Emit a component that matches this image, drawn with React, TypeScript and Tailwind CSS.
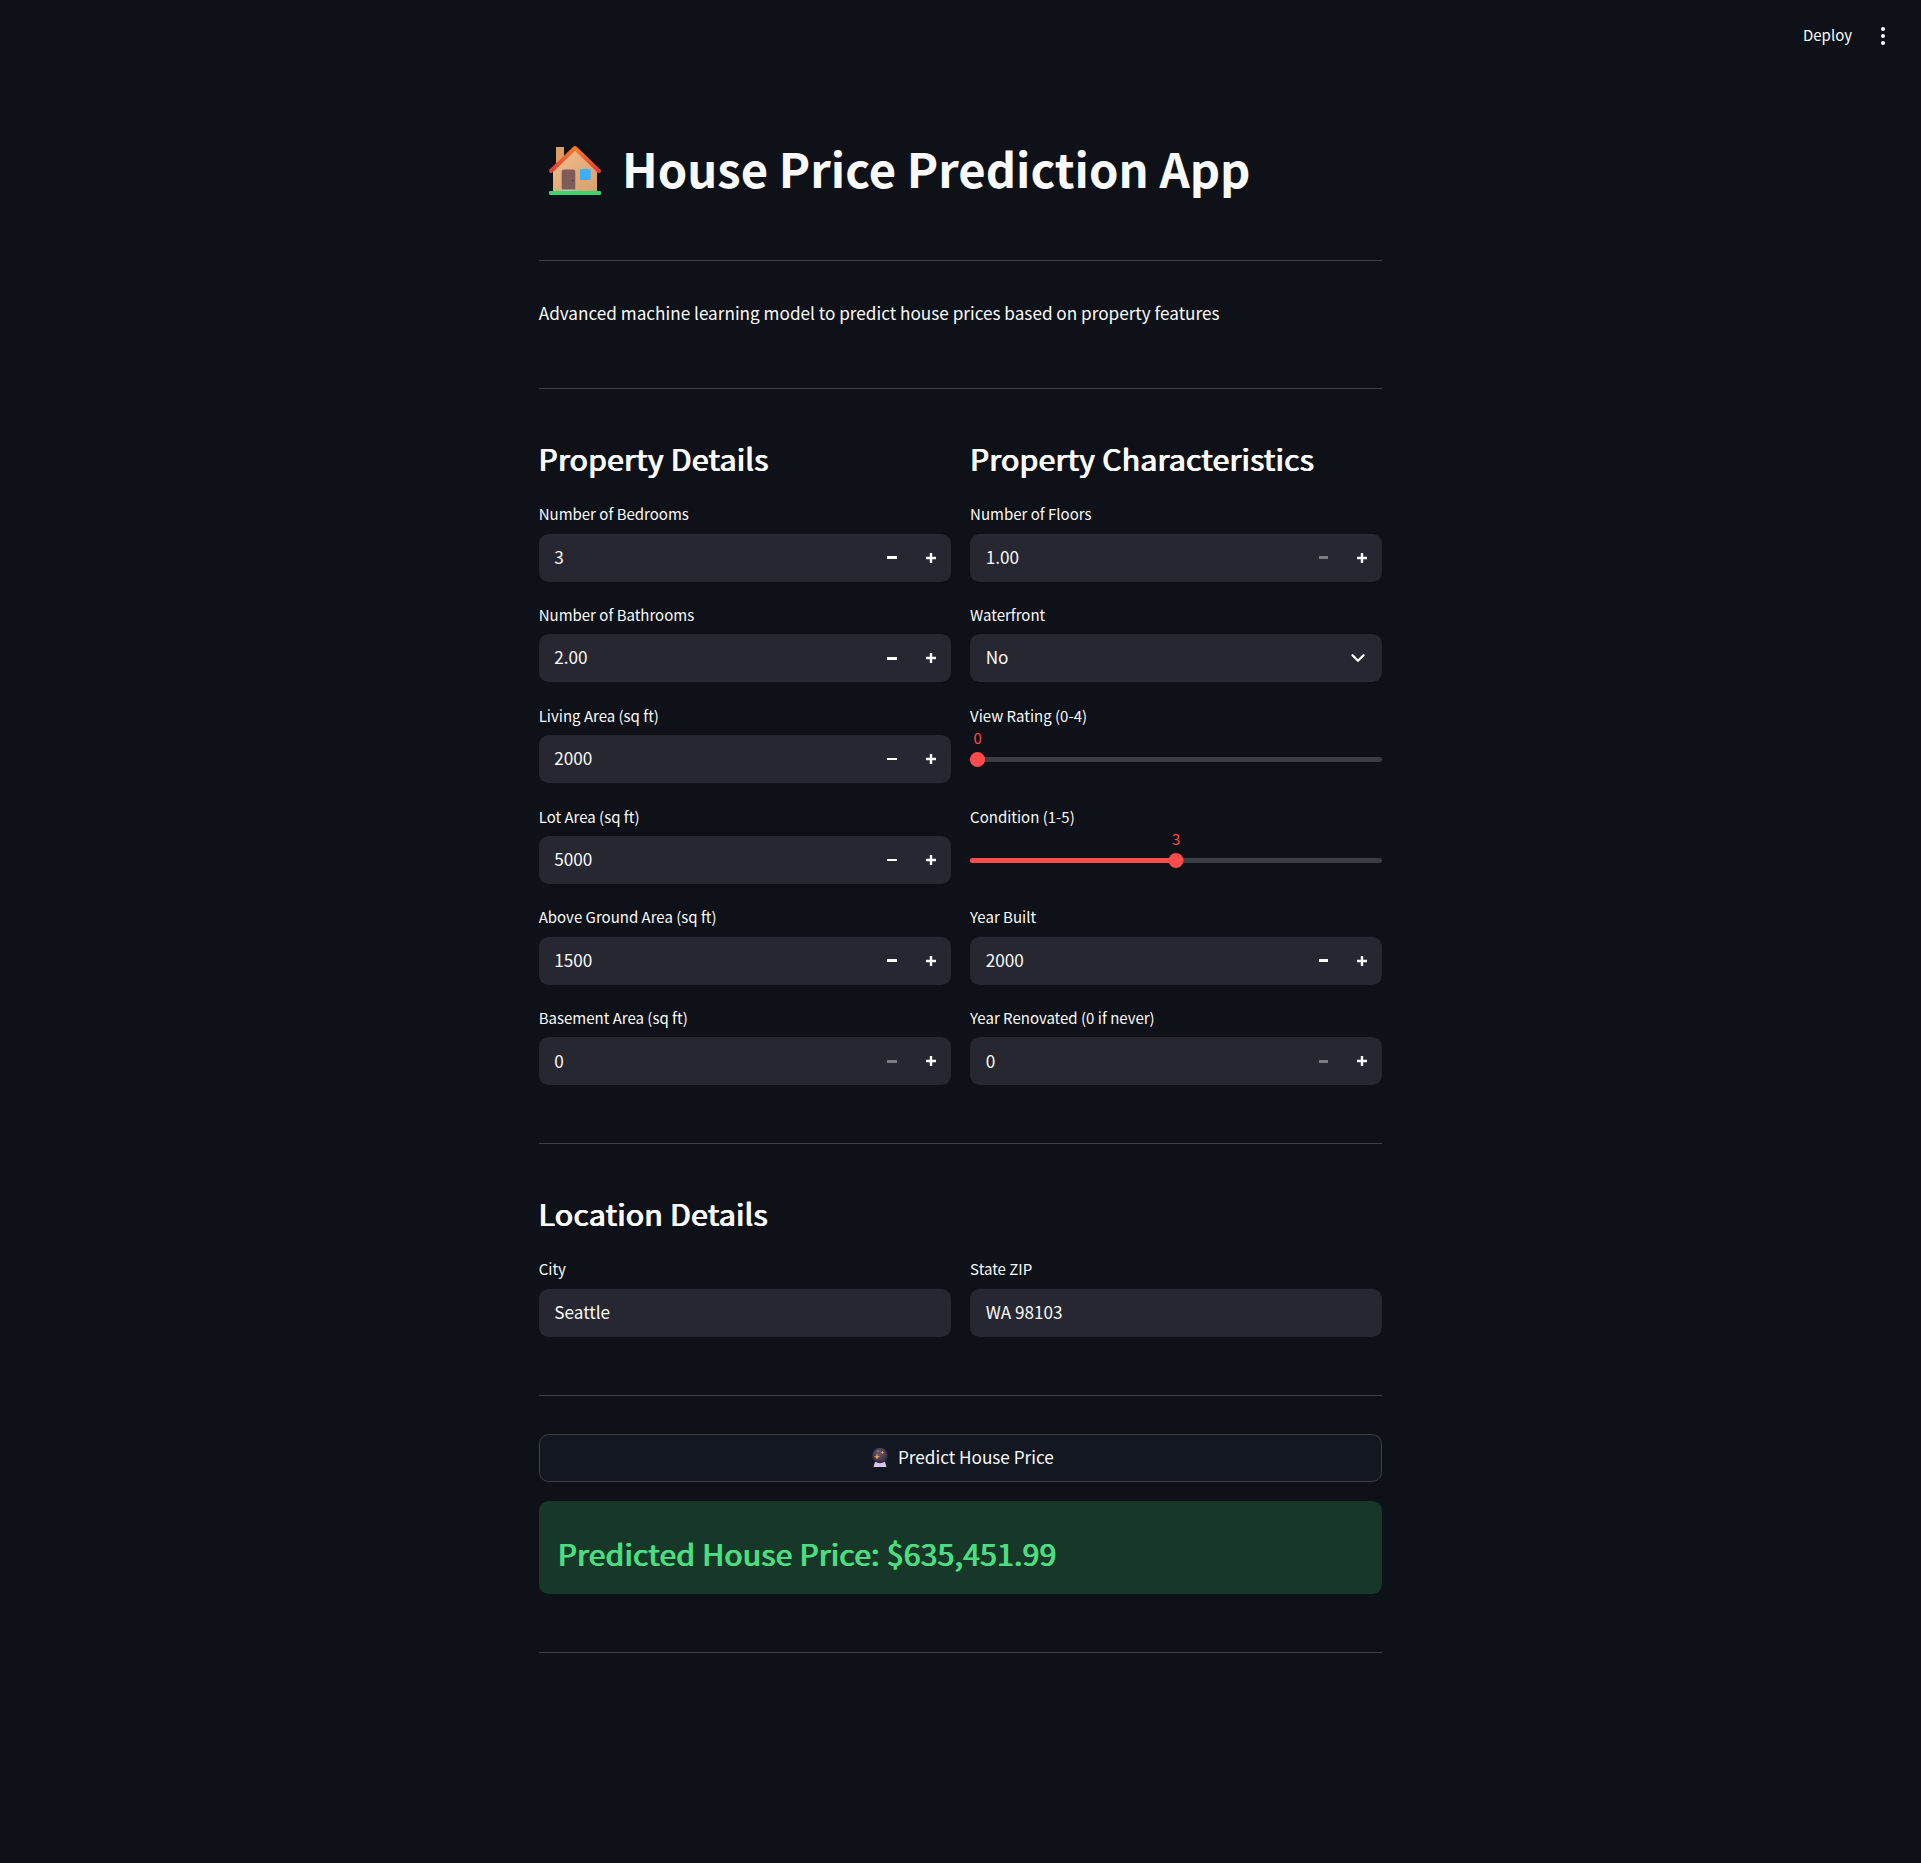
import { ChevronDown } from "lucide-react";

const bedroomsColumn = [
  { label: "Number of Bedrooms", value: "3" },
  { label: "Number of Bathrooms", value: "2.00" },
  { label: "Living Area (sq ft)", value: "2000" },
  { label: "Lot Area (sq ft)", value: "5000" },
  { label: "Above Ground Area (sq ft)", value: "1500" },
  { label: "Basement Area (sq ft)", value: "0", minusOff: true },
];

function HouseEmoji() {
  return (
    <svg width="52" height="50" viewBox="0 0 52 50">
      <defs>
        <linearGradient id="wall" x1="0" y1="0" x2="1" y2="1">
          <stop offset="0" stopColor="#efbf8e" />
          <stop offset="1" stopColor="#daa06c" />
        </linearGradient>
        <linearGradient id="roof" x1="0" y1="0" x2="0" y2="1">
          <stop offset="0" stopColor="#fb7a2a" />
          <stop offset="1" stopColor="#e03c36" />
        </linearGradient>
      </defs>
      <rect x="7" y="2" width="8" height="20" fill="#dba06a" />
      <path d="M4 24 26 4l22 20v22H4z" fill="url(#wall)" />
      <path d="M2 26 26 3l24 23" fill="none" stroke="url(#roof)" strokeWidth="4" strokeLinecap="round" strokeLinejoin="round" />
      <path d="M12.7 27a2.4 2.4 0 0 1 2.4-2.4h8.8a2.4 2.4 0 0 1 2.4 2.4v18H12.7z" fill="#7d5c5a" />
      <circle cx="23.8" cy="35.5" r="0.7" fill="#3f2b2b" />
      <rect x="31" y="24" width="10.7" height="11" rx="1" fill="#3eaef5" />
      <rect x="11" y="44.5" width="17" height="1.8" fill="#cbbcb4" />
      <rect x="0" y="46" width="52" height="4" rx="1.2" fill="#37d56e" />
    </svg>
  );
}

function CrystalBallEmoji() {
  return (
    <svg width="16" height="19" viewBox="0 0 16 19">
      <defs>
        <radialGradient id="ball" cx="0.45" cy="0.35" r="0.7">
          <stop offset="0" stopColor="#675878" />
          <stop offset="1" stopColor="#2d2536" />
        </radialGradient>
      </defs>
      <path d="M3 14h10l1.5 5h-13z" fill="#d8c4ec" />
      <circle cx="8" cy="7.5" r="7.7" fill="url(#ball)" />
      <path d="M5 5.5 5.8 8 8.3 8.8 5.8 9.6 5 12 4.2 9.6 1.8 8.8 4.2 8z" fill="#f6a93b" />
      <path d="M10.5 2.5 11 4 12.4 4.5 11 5 10.5 6.4 10 5 8.6 4.5 10 4z" fill="#f6a93b" />
      <circle cx="6" cy="3" r="0.7" fill="#f6a93b" />
    </svg>
  );
}

function FieldLabel({ children }: { children: React.ReactNode }) {
  return <label className="block h-[33.6px] pt-[1.4px] text-[15px] leading-[26px] text-[#fafafa]">{children}</label>;
}

function NumberField({ label, value, minusOff }: { label: string; value: string; minusOff?: boolean }) {
  return (
    <div>
      <FieldLabel>{label}</FieldLabel>
      <div className="flex h-[48px] items-center rounded-[9.6px] bg-[#262730] pl-[15.6px] pr-[1.2px]">
        <span className="flex-1 pb-[2px] text-[17.16px] text-[#fafafa]">{value}</span>
        <span className={`flex h-full w-[38.4px] items-center justify-center ${minusOff ? "opacity-40" : ""}`}>
          <span className="h-[2.4px] w-[9.6px] bg-[#fafafa]" />
        </span>
        <span className="flex h-full w-[38.4px] items-center justify-center">
          <svg width="10" height="10" viewBox="0 0 10 10" fill="#fafafa">
            <path d="M3.8 0h2.4v3.8H10v2.4H6.2V10H3.8V6.2H0V3.8h3.8z" />
          </svg>
        </span>
      </div>
    </div>
  );
}

function SelectField({ label, value }: { label: string; value: string }) {
  return (
    <div>
      <FieldLabel>{label}</FieldLabel>
      <div className="flex h-[48px] items-center justify-between rounded-[9.6px] bg-[#262730] pl-[15.6px] pr-[13.6px]">
        <span className="pb-[2px] text-[17.16px] text-[#fafafa]">{value}</span>
        <ChevronDown size={22} strokeWidth={2.6} className="text-[#fafafa]" />
      </div>
    </div>
  );
}

function TextField({ label, value }: { label: string; value: string }) {
  return (
    <div>
      <FieldLabel>{label}</FieldLabel>
      <div className="flex h-[48px] items-center rounded-[9.6px] bg-[#262730] px-[15.6px] pb-[2px] text-[17.16px] text-[#fafafa]">
        {value}
      </div>
    </div>
  );
}

function ViewRatingSlider() {
  return (
    <div>
      <FieldLabel>View Rating (0-4)</FieldLabel>
      <div className="relative h-[48px]">
        <div className="absolute top-[22px] h-[4.8px] w-full rounded-full bg-[#3b3c45]" />
        <div className="absolute left-0 top-[17px] h-[15px] w-[15px] rounded-full bg-[#ff4b4b]" />
        <span className="absolute left-[7.5px] top-[-7px] -translate-x-1/2 text-[15px] leading-[20px] text-[#ff4b4b]">0</span>
      </div>
    </div>
  );
}

function ConditionSlider() {
  return (
    <div>
      <FieldLabel>Condition (1-5)</FieldLabel>
      <div className="relative h-[48px]">
        <div className="absolute top-[22px] h-[4.8px] w-full rounded-full bg-[#3b3c45]" />
        <div className="absolute top-[22px] h-[4.8px] w-1/2 rounded-full bg-[#ff4b4b]" />
        <div className="absolute left-1/2 top-[17px] h-[15px] w-[15px] -translate-x-1/2 rounded-full bg-[#ff4b4b]" />
        <span className="absolute left-1/2 top-[-7px] -translate-x-1/2 text-[15px] leading-[20px] text-[#ff4b4b]">3</span>
      </div>
    </div>
  );
}

function SectionTitle({ children }: { children: React.ReactNode }) {
  return (
    <h3 className="mb-[22.2px] text-[30px] font-normal leading-[37.3px] tracking-[0.36px] text-[#fafafa] [text-shadow:0.6px_0.25px_0_#fafafa,-0.6px_-0.25px_0_#fafafa]">
      {children}
    </h3>
  );
}

export default function App() {
  return (
    <div className="min-h-screen bg-[#0e1117] font-['Noto_Sans_CJK_SC','Noto_Sans',sans-serif]">
      <header className="flex h-[72px] items-center justify-end pr-[36px]">
        <span className="mr-[29px] pb-[1px] text-[15px] text-[#fafafa]">Deploy</span>
        <span className="flex flex-col gap-[2.6px]">
          <span className="h-[4px] w-[4px] rounded-full bg-[#fafafa]" />
          <span className="h-[4px] w-[4px] rounded-full bg-[#fafafa]" />
          <span className="h-[4px] w-[4px] rounded-full bg-[#fafafa]" />
        </span>
      </header>

      <main className="mx-auto w-[843.6px] pt-[43.2px]">
        <h1 className="flex h-[106.6px] items-center pt-[24px] pb-[19.2px] text-[47.2px] font-bold leading-[58.6px] text-[#fafafa]">
          <span className="flex w-[83.3px] justify-center pb-[2px] pr-[11px]">
            <HouseEmoji />
          </span>
          <span className="pb-[4.8px]">House Price Prediction App</span>
        </h1>

        <hr className="mt-[38.4px] border-t border-[#3d4045]" />
        <p className="mt-[36.9px] text-[17.16px] leading-[30.7px] text-[#fafafa]">
          Advanced machine learning model to predict house prices based on property features
        </p>
        <hr className="mt-[59.5px] border-t border-[#3d4045]" />

        <div className="mt-[51.2px] grid grid-cols-2 gap-x-[19.2px]">
          <section>
            <SectionTitle>Property Details</SectionTitle>
            <div className="flex flex-col gap-[19.2px]">
              {bedroomsColumn.map((f) => (
                <NumberField key={f.label} label={f.label} value={f.value} minusOff={f.minusOff} />
              ))}
            </div>
          </section>
          <section>
            <SectionTitle>Property Characteristics</SectionTitle>
            <div className="flex flex-col gap-[19.2px]">
              <NumberField label="Number of Floors" value="1.00" minusOff />
              <SelectField label="Waterfront" value="No" />
              <ViewRatingSlider />
              <ConditionSlider />
              <NumberField label="Year Built" value="2000" />
              <NumberField label="Year Renovated (0 if never)" value="0" minusOff />
            </div>
          </section>
        </div>

        <hr className="mt-[57.5px] border-t border-[#3d4045]" />

        <div className="mt-[51.5px]">
          <SectionTitle>Location Details</SectionTitle>
          <div className="grid grid-cols-2 gap-x-[19.2px]">
            <TextField label="City" value="Seattle" />
            <TextField label="State ZIP" value="WA 98103" />
          </div>
        </div>

        <hr className="mt-[58px] border-t border-[#3d4045]" />

        <button className="mt-[38.4px] flex h-[48px] w-full items-center justify-center gap-[10px] rounded-[9.6px] border border-[#3d4045] bg-[#131720] pl-[4.8px] text-[17.16px] text-[#fafafa]">
          <CrystalBallEmoji />
          <span className="pb-[2px]">Predict House Price</span>
        </button>

        <div className="mt-[19.2px] flex h-[92.6px] items-center rounded-[9.6px] bg-[#173828] px-[19.2px] pt-[13px] text-[30px] font-normal tracking-[0.29px] text-[#4ade80] [text-shadow:0.6px_0.25px_0_#4ade80,-0.6px_-0.25px_0_#4ade80]">
          Predicted House Price: $635,451.99
        </div>

        <hr className="mt-[58px] border-t border-[#3d4045]" />
      </main>
    </div>
  );
}
